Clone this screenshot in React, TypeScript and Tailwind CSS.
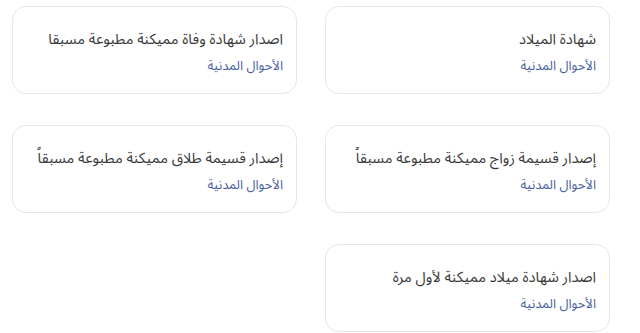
const services = [
  { title: 'شهادة الميلاد', dept: 'الأحوال المدنية' },
  { title: 'اصدار شهادة وفاة مميكنة مطبوعة مسبقا', dept: 'الأحوال المدنية' },
  { title: 'إصدار قسيمة زواج مميكنة مطبوعة مسبقاً', dept: 'الأحوال المدنية' },
  { title: 'إصدار قسيمة طلاق مميكنة مطبوعة مسبقاً', dept: 'الأحوال المدنية' },
  { title: 'اصدار شهادة ميلاد مميكنة لأول مرة', dept: 'الأحوال المدنية' },
];

const App = () => {
  return (
    <div dir="rtl" className="bg-white min-h-screen pt-[6px] pr-[30px] pl-[12px]" style={{ fontFamily: '"Noto Sans Arabic", "Noto Kufi Arabic", "Noto Sans", "DejaVu Sans", sans-serif' }}>
      <div className="grid grid-cols-2 gap-x-[28px] gap-y-[31px]">
        {services.map((s, i) => (
          <div key={i} className="h-[88px] rounded-[14px] border border-[#e6e6ea] bg-white px-[13px] flex flex-col justify-center">
            <div className="text-[14.7px] leading-[22px] text-[#3a3a3a] mt-[3px] whitespace-nowrap">{s.title}</div>
            <div className="text-[13px] leading-[18px] text-[#4a5fa0] mt-[6px] whitespace-nowrap">{s.dept}</div>
          </div>
        ))}
      </div>
    </div>
  );
};

export default App;
